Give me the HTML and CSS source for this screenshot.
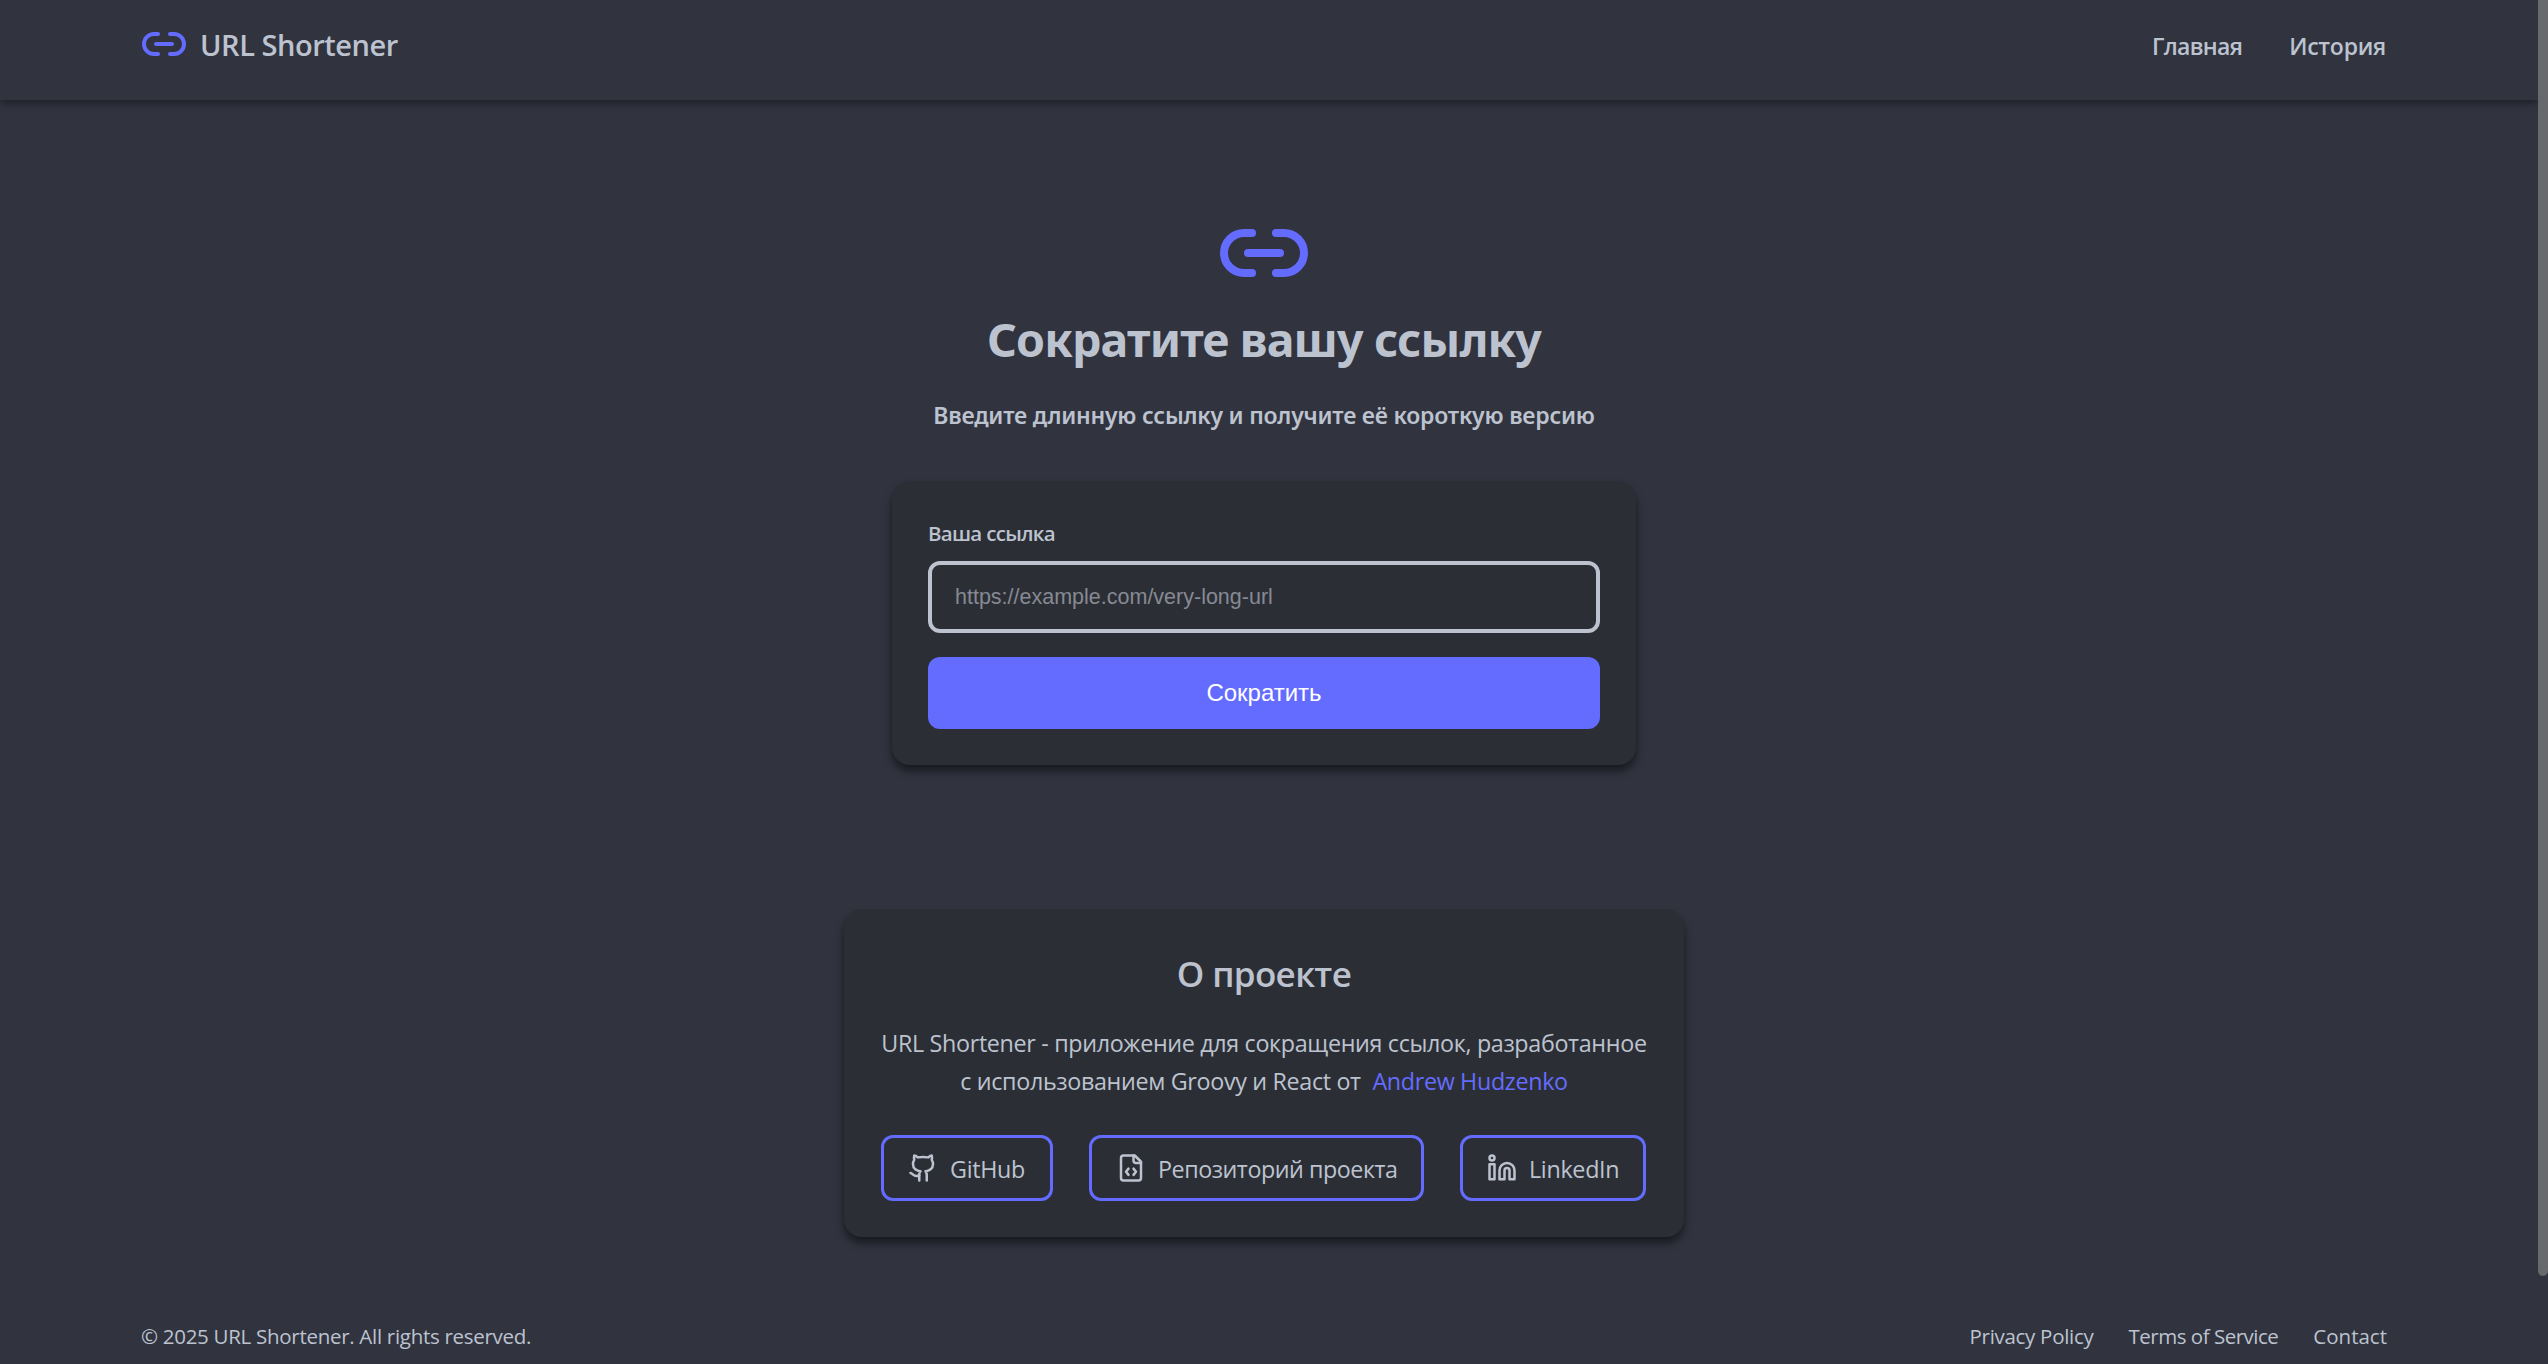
FILE: index.html
```html
<!DOCTYPE html>
<html lang="ru">
<head>
<meta charset="utf-8">
<title>URL Shortener</title>
<link rel="stylesheet" href="styles.css">
</head>
<body>
<header class="header">
  <a class="brand">
    <svg class="icon brand-icon" viewBox="0 0 24 24"><path d="M9 17H7A5 5 0 0 1 7 7h2"/><path d="M15 7h2a5 5 0 1 1 0 10h-2"/><path d="M8 12h8"/></svg>
    <span class="brand-name">URL Shortener</span>
  </a>
  <nav class="nav"><a class="nav-home">Главная</a><a class="nav-history">История</a></nav>
</header>
<main class="main">
  <svg class="icon hero-icon" viewBox="0 0 24 24"><path d="M9 17H7A5 5 0 0 1 7 7h2"/><path d="M15 7h2a5 5 0 1 1 0 10h-2"/><path d="M8 12h8"/></svg>
  <h1 class="title">Сократите вашу ссылку</h1>
  <p class="subtitle">Введите длинную ссылку и получите её короткую версию</p>
  <form class="card form">
    <label class="label" for="url">Ваша ссылка</label>
    <input class="input" id="url" type="text" placeholder="https://example.com/very-long-url">
    <button class="submit" type="button">Сократить</button>
  </form>
  <section class="card about">
    <h2 class="about-title">О проекте</h2>
    <p class="about-text">URL Shortener - приложение для сокращения ссылок, разработанное<br>с использованием Groovy и React от <a class="author">Andrew Hudzenko</a></p>
    <div class="links">
      <a class="link link-github"><svg class="icon" viewBox="0 0 24 24"><path d="M15 22v-4a4.8 4.8 0 0 0-1-3.5c3 0 6-2 6-5.5.08-1.25-.27-2.48-1-3.5.28-1.15.28-2.35 0-3.5 0 0-1 0-3 1.5-2.64-.5-5.36-.5-8 0C6 2 5 2 5 2c-.3 1.15-.3 2.35 0 3.5A5.403 5.403 0 0 0 4 9c0 3.5 3 5.5 6 5.5-.39.49-.68 1.05-.85 1.65-.17.6-.22 1.23-.15 1.85v4"/><path d="M9 18c-4.51 2-5-2-7-2"/></svg><span>GitHub</span></a>
      <a class="link link-repo"><svg class="icon" viewBox="0 0 24 24"><path d="M10 12.5 8 15l2 2.5"/><path d="m14 12.5 2 2.5-2 2.5"/><path d="M14 2v4a2 2 0 0 0 2 2h4"/><path d="M15 2H6a2 2 0 0 0-2 2v16a2 2 0 0 0 2 2h12a2 2 0 0 0 2-2V7z"/></svg><span>Репозиторий проекта</span></a>
      <a class="link link-linkedin"><svg class="icon" viewBox="0 0 24 24"><path d="M16 8a6 6 0 0 1 6 6v7h-4v-7a2 2 0 0 0-2-2 2 2 0 0 0-2 2v7h-4v-7a6 6 0 0 1 6-6z"/><rect width="4" height="12" x="2" y="9"/><circle cx="4" cy="4" r="2"/></svg><span>LinkedIn</span></a>
    </div>
  </section>
</main>
<footer class="footer">
  <span>© 2025 URL Shortener. All rights reserved.</span>
  <nav class="legal"><a>Privacy Policy</a><a class="terms">Terms of Service</a><a class="contact">Contact</a></nav>
</footer>
<div class="page-thumb"></div>
</body>
</html>
```
FILE: styles.css
```css
:root {
  --bg: #31333f;
  --card: #2c2e36;
  --text: #bcc3cf;
  --accent: #646cff;
}

* { box-sizing: border-box; margin: 0; padding: 0; }

html { height: 100%; overflow: hidden; background: var(--bg); }

body {
  position: relative;
  display: flex;
  flex-direction: column;
  height: 1364px;
  color: var(--text);
  background: var(--bg);
  font-family: "Open Sans", "Noto Sans", sans-serif;
  white-space: nowrap;
}

.icon {
  display: block;
  flex: none;
  fill: none;
  stroke: currentColor;
  stroke-width: 2;
  stroke-linecap: round;
  stroke-linejoin: round;
}

.header {
  display: flex;
  justify-content: space-between;
  flex: none;
  height: 100px;
  margin-right: 10px;
  padding: 20px 152px 32px 140px;
  box-shadow: 0 3px 8px rgba(0, 0, 0, 0.4);
}

.brand {
  display: flex;
  align-items: center;
  gap: 12px;
  font-size: 29px;
  font-weight: 600;
  line-height: 46px;
  letter-spacing: -0.45px;
}

.brand-icon { width: 48px; height: 48px; color: var(--accent); }
.brand-name { padding-top: 2px; }

.nav {
  display: flex;
  gap: 47px;
  padding-top: 2px;
  font-size: 23px;
  font-weight: 600;
  line-height: 48px;
}

.nav-home { letter-spacing: -0.7px; }
.nav-history { letter-spacing: -0.25px; }

.main {
  display: flex;
  flex-direction: column;
  align-items: center;
  flex: none;
  padding: 105px 20px 0 0;
}

.hero-icon { width: 96px; height: 96px; color: var(--accent); }

.title {
  margin-top: 2px;
  font-family: "Noto Sans", sans-serif;
  font-size: 46.5px;
  font-weight: 700;
  line-height: 72px;
  letter-spacing: -0.85px;
}

.subtitle {
  margin-top: 22px;
  font-family: "Noto Sans", sans-serif;
  font-size: 23px;
  font-weight: 600;
  line-height: 36px;
  letter-spacing: -0.22px;
}

.card {
  padding: 36px;
  border-radius: 18px;
  background: var(--card);
  box-shadow: 0 6px 9px rgba(0, 0, 0, 0.5);
}

.form {
  display: flex;
  flex-direction: column;
  width: 744px;
  height: 284px;
  margin-top: 48px;
}

.label {
  font-size: 20.5px;
  font-weight: 600;
  line-height: 32px;
  letter-spacing: -0.7px;
}

.input {
  height: 72px;
  margin-top: 12px;
  padding: 0 23px;
  border: 4px solid var(--text);
  border-radius: 12px;
  outline: 0;
  background: transparent;
  color: var(--text);
  font: 21.5px "Liberation Sans", Arial, sans-serif;
}

.input::placeholder { color: #868a93; opacity: 1; }

.submit {
  height: 72px;
  margin-top: 24px;
  border: 0;
  border-radius: 12px;
  background: var(--accent);
  color: #fff;
  font: 24px "Liberation Sans", Arial, sans-serif;
}

.about { width: 840px; height: 328px; margin-top: 144px; }

.about-title {
  font-size: 35px;
  font-weight: 600;
  line-height: 57px;
  letter-spacing: -0.65px;
  text-align: center;
}

.about-text {
  margin: 22px -10px 0;
  font-size: 23.3px;
  line-height: 38.4px;
  letter-spacing: -0.33px;
  text-align: center;
}

.author { margin-left: 6px; color: var(--accent); }

.links { display: flex; gap: 36px; margin: 34px 0 0 1px; }

.link {
  display: flex;
  align-items: center;
  gap: 12px;
  height: 66px;
  padding-left: 24px;
  border: 3px solid var(--accent);
  border-radius: 12px;
  font-size: 23.3px;
  line-height: 36px;
  letter-spacing: -0.3px;
}

.link .icon { width: 30px; height: 30px; }
.link span { padding-top: 2px; }
.link-github { width: 172px; }
.link-repo { width: 335px; letter-spacing: -0.46px; }
.link-linkedin { width: 186px; }

.footer {
  display: flex;
  justify-content: space-between;
  margin-top: 83px;
  padding: 0 161px 0 141px;
  font-size: 20.5px;
  line-height: 32px;
  letter-spacing: -0.29px;
}

.legal { display: flex; gap: 35px; }
.terms { letter-spacing: -0.49px; }
.contact { letter-spacing: 0; }

.page-thumb {
  position: absolute;
  top: 0;
  right: 0;
  width: 10px;
  height: 1276px;
  border-radius: 0 0 5px 5px;
  background: #68696d;
}
```
